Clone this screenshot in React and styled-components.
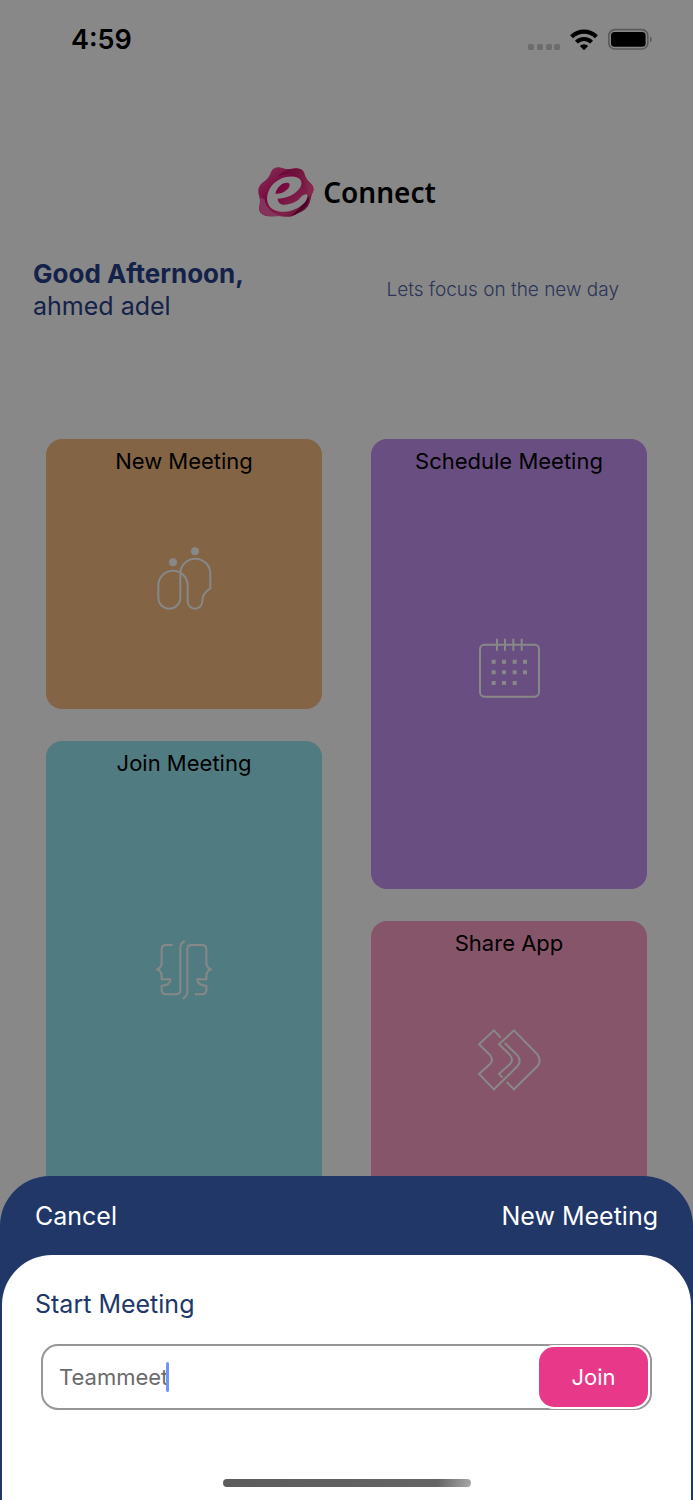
import React, { useState } from "react";
import styled, { createGlobalStyle } from "styled-components";

const GlobalStyle = createGlobalStyle`
  *, *::before, *::after { box-sizing: border-box; }
  body { margin: 0; background: #888888; }
  button, input { font: inherit; }
`;

const Screen = styled.div`
  height: 100vh;
  overflow: hidden;
  background: #888888;
  color: #000;
  font-family: Inter, "Liberation Sans", sans-serif;
`;

const StatusBar = styled.header`
  display: flex;
  justify-content: space-between;
  align-items: center;
  height: 80px;
  padding: 0 40px 0 71px;
`;

const Clock = styled.time`
  font-size: 27px;
  font-weight: 600;
  line-height: 32px;
`;

const StatusIcons = styled.div`
  display: flex;
  align-items: center;
  gap: 10px;
`;

const Brand = styled.div`
  display: flex;
  justify-content: center;
  align-items: center;
  gap: 8px;
  margin-top: 86px;
  height: 52px;
`;

const BrandName = styled.span`
  font-family: "Noto Sans", "Open Sans", sans-serif;
  font-size: 28px;
  font-weight: 600;
  line-height: 40px;
`;

const Intro = styled.section`
  display: flex;
  justify-content: space-between;
  align-items: center;
  margin-top: 40px;
  padding: 0 74px 0 33px;
  color: #142148;
`;

const Greeting = styled.h1`
  margin: 0;
  font-size: 25px;
  font-weight: 400;
  line-height: 32px;

  strong {
    display: block;
    font-size: 26px;
    font-weight: 700;
  }
`;

const Tagline = styled.p`
  margin: 0;
  color: #2b3557;
  font-size: 19px;
  font-weight: 300;
  line-height: 24px;
`;

const Board = styled.main`
  display: grid;
  grid-template-columns: 1fr 1fr;
  gap: 49px;
  margin-top: 117px;
  padding: 0 46px;
`;

const Column = styled.div`
  display: flex;
  flex-direction: column;
  gap: 32px;
`;

const Card = styled.button`
  display: flex;
  flex-direction: column;
  align-items: center;
  height: ${({ $tall }) => ($tall ? 450 : 270)}px;
  padding: 8px;
  border: 0;
  border-radius: 16px;
  background: ${({ $color }) => $color};
  color: #000;
  font-size: 22px;
  line-height: 28px;
`;

const CardArt = styled.span`
  display: flex;
  flex: 1;
  align-items: center;
  padding-bottom: 20px;

  svg {
    display: block;
    fill: none;
    stroke: #888888;
    stroke-width: 6;
  }
`;

const Sheet = styled.section`
  position: fixed;
  inset: auto 0 0 0;
  padding: 0 2px;
  border-radius: 50px 50px 0 0;
  background: #203768;
`;

const SheetBar = styled.div`
  display: flex;
  justify-content: space-between;
  align-items: center;
  height: 79px;
  padding: 0 33px;
  color: #fff;
  font-size: 25px;
  line-height: 32px;
`;

const CancelButton = styled.button`
  padding: 0;
  border: 0;
  background: none;
  color: inherit;
`;

const SheetTitle = styled.h2`
  margin: 0;
  font-size: inherit;
  font-weight: 400;
`;

const SheetBody = styled.form`
  padding: 32px 39px 13px;
  border-radius: 50px 50px 0 0;
  background: #fff;
`;

const FieldLabel = styled.label`
  display: block;
  margin-left: -6px;
  color: #203768;
  font-size: 25px;
  line-height: 34px;
`;

const Field = styled.div`
  display: flex;
  align-items: center;
  height: 66px;
  margin-top: 23px;
  padding-left: 16px;
  border: 2px solid #969696;
  border-radius: 17px;
`;

const NameInput = styled.input`
  field-sizing: content;
  min-width: 0;
  padding: 0;
  border: 0;
  outline: 0;
  background: none;
  color: #6b6b6b;
  caret-color: transparent;
  font-size: 22px;
  line-height: 28px;
`;

const Caret = styled.span`
  width: 3px;
  height: 30px;
  margin-left: -2px;
  border-radius: 2px;
  background: #7494f5;
`;

const JoinButton = styled.button`
  width: 113px;
  height: 64px;
  margin: 0 0 0 auto;
  border: 2px solid #fff;
  border-radius: 17px;
  background: #e83889;
  color: #fff;
  font-size: 22px;
  line-height: 28px;
`;

const HomeIndicator = styled.div`
  width: 248px;
  height: 8px;
  margin: 69px auto 0;
  border-radius: 4px;
  background: linear-gradient(100deg, #5c5c5c, #646464 86%, #a8a8a8);
`;

const SignalIcon = () => (
  <svg width="32" height="24" viewBox="0 0 32 24" fill="#6c6c6c" aria-hidden="true">
    {[0, 9, 18, 26].map((x) => (
      <rect key={x} x={x} y="16" width="6" height="6" rx="1.5" />
    ))}
  </svg>
);

const WifiIcon = () => (
  <svg width="28" height="24" viewBox="0 0 28 24" fill="none" aria-hidden="true">
    <path d="M1.6 8.8a17.6 17.6 0 0 1 24.8 0" stroke="#000" strokeWidth="4.2" />
    <path d="M6.4 14.2a10.8 10.8 0 0 1 15.2 0" stroke="#000" strokeWidth="4" />
    <path d="M14 22.2l-4.2-4.3a6.1 6.1 0 0 1 8.4 0z" fill="#000" />
  </svg>
);

const BatteryIcon = () => (
  <svg width="45" height="24" viewBox="1 1 45 24" fill="none" aria-hidden="true">
    <rect x="1.8" y="2.6" width="39" height="19.4" rx="6" stroke="#5a5a5a" strokeWidth="1.6" />
    <rect x="4" y="5" width="34.6" height="14.8" rx="3.5" fill="#000" />
    <path d="M43 9.4c2.3.8 2.3 5.2 0 6z" fill="#5a5a5a" />
  </svg>
);

const BrandMark = () => (
  <svg width="58" height="52" viewBox="54 48 174 156" aria-hidden="true">
    <defs>
      <linearGradient id="petal" x1="0" y1="0" x2="1" y2="1">
        <stop offset="0" stopColor="#853a5a" />
        <stop offset="0.4" stopColor="#79063f" />
        <stop offset="0.7" stopColor="#7e2149" />
        <stop offset="1" stopColor="#520128" />
      </linearGradient>
      <linearGradient id="fold" x1="0" y1="0" x2="1" y2="0.6">
        <stop offset="0" stopColor="#5d0330" />
        <stop offset="1" stopColor="#87294f" />
      </linearGradient>
    </defs>
    <path
      d="M96 66C101 54 112 50 126 53C138 56 145 58 158 56C176 52 192 56 196 70C199 81 202 87 210 95C221 105 227 113 222 125C217 136 216 143 213 154C208 173 198 181 184 187C173 191 167 198 152 200C138 202 130 198 116 198C100 199 84 201 72 194C60 187 59 177 62 164C64 154 64 147 60 136C55 119 59 106 73 96C86 87 91 79 96 66Z"
      fill="url(#petal)"
    />
    <path d="M116 80C136 60 166 52 187 59C197 66 196 84 210 95C221 105 227 113 222 125L211 142C208 112 196 84 168 74C150 68 132 72 116 80Z" fill="url(#fold)" />
    <path d="M61 141C63 150 63 158 62 166C60 182 64 191 76 196C92 201 110 197 128 198C104 191 79 174 77 148Z" fill="#84345a" />
    <path d="M206 136C218 158 196 184 154 200C172 186 190 166 206 136Z" fill="#500027" />
    <path
      fillRule="evenodd"
      d="M206 138C202 168 154 192 116 184C84 176 76 146 92 116C107 89 139 76 167 80C190 84 194 103 177 121C161 138 137 146 116 146C116 161 131 168 150 162C169 158 179 150 186 141C193 133 207 129 206 138ZM109 131C113 112 130 97 145 98C157 99 152 113 142 121C132 130 118 133 109 131Z"
      fill="#888888"
    />
  </svg>
);

const PeopleIcon = () => (
  <svg width="90" height="90" viewBox="-3 8 270 270" aria-hidden="true">
    <circle cx="99" cy="96" r="12" fill="#888888" stroke="none" />
    <circle cx="165" cy="63" r="12" fill="#888888" stroke="none" />
    <path d="M55 165a44 44 0 0 1 88 0v48a22 22 0 0 0 44 0C187 194 196 183 211 174V130a45 45 0 0 0-90 0v72a33 33 0 0 1-66 0z" />
  </svg>
);

const CalendarIcon = () => (
  <svg width="90" height="90" viewBox="-3 -7 270 270" aria-hidden="true">
    <rect x="45" y="58" width="177" height="156" rx="13" />
    <path d="M96 40v36M120 40v36M145 40v36M170 40v36" />
    <path
      d="M80 109h12M111 109h12M143 109h12M174 109h12M80 141h12M111 141h12M143 141h12M174 141h12M80 173h12M111 173h12M143 173h12"
      strokeWidth="12"
    />
  </svg>
);

const FacesIcon = () => (
  <svg width="90" height="90" viewBox="-2 0 270 270" aria-hidden="true">
    <path d="M99 60H79Q66 60 66 73V115Q66 127 53 133Q66 140 66 152V163H92Q92 182 66 182V195Q66 208 79 208H108Q122 208 122 195V69Q122 55 135 48" />
    <path d="M129 221Q143 213 143 200V73Q143 60 156 60H187Q200 60 200 73V115Q200 127 213 133Q200 140 200 152V163H173Q174 182 200 182V195Q200 208 187 208H166" />
  </svg>
);

const ArrowsIcon = () => (
  <svg width="90" height="90" viewBox="-3 0 270 270" aria-hidden="true">
    <path d="M107 68L87 46L42 88L75 120Q87 135 75 147L42 177L87 223L157 154Q171 138 157 121L119 84" />
    <path d="M113 188L102 177L135 147Q147 135 135 120L102 88L147 46L217 118Q231 138 217 154L147 223L125 201" />
  </svg>
);

const columns = [
  [
    { title: "New Meeting", color: "#836444", Icon: PeopleIcon },
    { title: "Join Meeting", color: "#507b81", Icon: FacesIcon, tall: true },
  ],
  [
    { title: "Schedule Meeting", color: "#694e82", Icon: CalendarIcon, tall: true },
    { title: "Share App", color: "#875569", Icon: ArrowsIcon },
  ],
];

export default function App() {
  const [name, setName] = useState("Teammeet");

  return (
    <Screen>
      <GlobalStyle />
      <StatusBar>
        <Clock>4:59</Clock>
        <StatusIcons>
          <SignalIcon />
          <WifiIcon />
          <BatteryIcon />
        </StatusIcons>
      </StatusBar>
      <Brand>
        <BrandMark />
        <BrandName>Connect</BrandName>
      </Brand>
      <Intro>
        <Greeting>
          <strong>Good Afternoon,</strong>
          ahmed adel
        </Greeting>
        <Tagline>Lets focus on the new day</Tagline>
      </Intro>
      <Board>
        {columns.map((cards, i) => (
          <Column key={i}>
            {cards.map(({ title, color, Icon, tall }) => (
              <Card key={title} type="button" $color={color} $tall={tall}>
                {title}
                <CardArt>
                  <Icon />
                </CardArt>
              </Card>
            ))}
          </Column>
        ))}
      </Board>
      <Sheet>
        <SheetBar>
          <CancelButton type="button">Cancel</CancelButton>
          <SheetTitle>New Meeting</SheetTitle>
        </SheetBar>
        <SheetBody onSubmit={(e) => e.preventDefault()}>
          <FieldLabel htmlFor="meeting-name">Start Meeting</FieldLabel>
          <Field>
            <NameInput id="meeting-name" value={name} onChange={(e) => setName(e.target.value)} />
            <Caret />
            <JoinButton type="submit">Join</JoinButton>
          </Field>
          <HomeIndicator />
        </SheetBody>
      </Sheet>
    </Screen>
  );
}
